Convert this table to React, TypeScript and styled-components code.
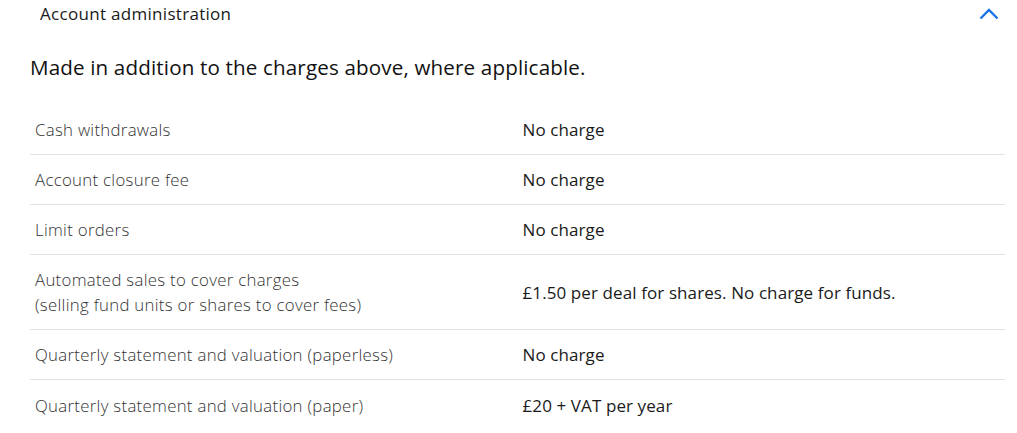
import React from "react";
import styled, { createGlobalStyle } from "styled-components";

const Global = createGlobalStyle`
  html, body { margin: 0; padding: 0; background: #fff; }
  body { font-family: "Open Sans", "Noto Sans", sans-serif; color: #1a1a1a; }
`;

const Page = styled.div`
  width: 1017px;
  padding: 0 12px 0 30px;
  box-sizing: border-box;
`;

const Header = styled.div`
  display: flex;
  align-items: center;
  justify-content: space-between;
  height: 27px;
  padding: 0 6px 0 10px;
`;

const HeaderTitle = styled.span`
  font-size: 17px;
  letter-spacing: 0.3px;
  color: #1a1a1a;
`;

const Chevron = styled.svg`
  width: 20px;
  height: 12px;
  display: block;
`;

const Intro = styled.h2`
  margin: 26px 0 24px;
  font-size: 20.6px;
  font-weight: 500;
  letter-spacing: 0.15px;
  line-height: 28px;
  color: #111;
`;

const Table = styled.div`
  display: flex;
  flex-direction: column;
`;

const Row = styled.div<{ $last?: boolean }>`
  display: grid;
  grid-template-columns: 1fr 1fr;
  align-items: center;
  min-height: 50px;
  padding: 12px 0;
  box-sizing: border-box;
  border-bottom: ${(p) => (p.$last ? "none" : "1px solid #e3e3e3")};
`;

const Label = styled.div`
  padding: 0 5px;
  font-size: 16.8px;
  font-weight: 300;
  letter-spacing: 0.3px;
  line-height: 25px;
  color: #333;
`;

const Value = styled.div`
  padding: 0 5px;
  font-size: 17px;
  letter-spacing: 0.1px;
  line-height: 25px;
  color: #1a1a1a;
`;

const rows: { label: React.ReactNode; value: string }[] = [
  { label: "Cash withdrawals", value: "No charge" },
  { label: "Account closure fee", value: "No charge" },
  { label: "Limit orders", value: "No charge" },
  {
    label: (
      <>
        Automated sales to cover charges
        <br />
        (selling fund units or shares to cover fees)
      </>
    ),
    value: "£1.50 per deal for shares. No charge for funds.",
  },
  { label: "Quarterly statement and valuation (paperless)", value: "No charge" },
  { label: "Quarterly statement and valuation (paper)", value: "£20 + VAT per year" },
];

export default function App() {
  return (
    <>
      <Global />
      <Page>
        <Header>
          <HeaderTitle>Account administration</HeaderTitle>
          <Chevron viewBox="0 0 20 12" fill="none">
            <path d="M1.5 10.5 L10 2 L18.5 10.5" stroke="#1a73e8" strokeWidth="2.4" />
          </Chevron>
        </Header>
        <Intro>Made in addition to the charges above, where applicable.</Intro>
        <Table>
          {rows.map((r, i) => (
            <Row key={i} $last={i === rows.length - 1}>
              <Label>{r.label}</Label>
              <Value>{r.value}</Value>
            </Row>
          ))}
        </Table>
      </Page>
    </>
  );
}
